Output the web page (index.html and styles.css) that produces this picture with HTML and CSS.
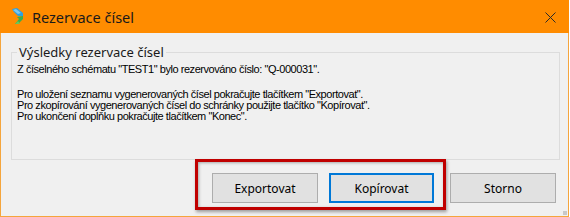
FILE: index.html
```html
<!DOCTYPE html>
<html lang="cs">
<head>
<meta charset="utf-8">
<title>Rezervace čísel</title>
<link rel="stylesheet" href="styles.css">
</head>
<body>
<div class="window">
  <div class="titlebar">
    <svg class="app-icon" width="12" height="17" viewBox="0 0 12 17">
      <polygon points="0,1 5,0 11,5 11,8 6,8 2,4" fill="#2f9fe0"/>
      <polygon points="1,2 4,1 9,5 6,6" fill="#7cc8f0"/>
      <polygon points="11,8 11,11 6,16 3,16 7,11 5,9" fill="#3cae4a"/>
      <polygon points="3,16 6,13 8,16" fill="#6cc65a"/>
    </svg>
    <span class="title">Rezervace čísel</span>
    <svg class="close" width="11" height="11" viewBox="0 0 11 11">
      <path d="M0.5 0.5 L10.5 10.5 M10.5 0.5 L0.5 10.5" stroke="#2b2b2b" stroke-width="1" fill="none"/>
    </svg>
  </div>
  <div class="content">
    <fieldset class="group">
      <legend>Výsledky rezervace čísel</legend>
      <p class="line first">Z číselného schématu "TEST1" bylo rezervováno číslo: "Q-000031".</p>
      <p class="line gap">Pro uložení seznamu vygenerovaných čísel pokračujte tlačítkem "Exportovat".</p>
      <p class="line">Pro zkopírování vygenerovaných čísel do schránky použijte tlačítko "Kopírovat".</p>
      <p class="line">Pro ukončení doplňku pokračujte tlačítkem "Konec".</p>
    </fieldset>
    <div class="buttons">
      <button class="btn">Exportovat</button>
      <button class="btn focused">Kopírovat</button>
      <button class="btn storno">Storno</button>
    </div>
  </div>
  <div class="highlight"></div>
  <div class="grip"></div>
</div>
</body>
</html>
```

FILE: styles.css
```css
html, body {
  margin: 0;
  padding: 0;
  background: #ffffff;
}
.window {
  position: relative;
  width: 569px;
  height: 217px;
  box-sizing: border-box;
  border: 1px solid #f5a53c;
  border-top: none;
  background: #f0f0f0;
  display: flex;
  flex-direction: column;
  font-family: "Liberation Sans", Arial, sans-serif;
}
.titlebar {
  height: 33px;
  margin: 0 -1px;
  background: #ff8c00;
  display: flex;
  align-items: flex-start;
  flex-shrink: 0;
}
.app-icon {
  margin: 8px 0 0 12px;
}
.title {
  margin: 8px 0 0 8px;
  font-family: "Noto Sans", "Open Sans", sans-serif;
  font-size: 14.5px;
  line-height: 18px;
  color: #1a1a1a;
}
.close {
  margin: 12px 0 0 auto;
  margin-right: 13px;
}
.content {
  flex: 1;
  display: flex;
  flex-direction: column;
}
.group {
  margin: 11px 8px 0 10px;
  padding: 0 5px;
  height: 116px;
  box-sizing: border-box;
  border: 1px solid #dcdcdc;
  min-width: 0;
}
.group legend {
  padding: 0 2px;
  font-family: "Noto Sans", "Open Sans", sans-serif;
  font-size: 13px;
  line-height: 16px;
  color: #1a1a1a;
}
.line {
  margin: 0;
  font-size: 11px;
  line-height: 11px;
  letter-spacing: -0.45px;
  color: #000;
  white-space: nowrap;
}
.line.first {
  margin-top: 4px;
}
.line.gap {
  margin-top: 14px;
}
.buttons {
  display: flex;
  justify-content: flex-end;
  padding: 13px 12px 0 0;
}
.btn {
  width: 106px;
  height: 30px;
  box-sizing: border-box;
  background: #e1e1e1;
  border: 1px solid #adadad;
  font-family: "Noto Sans", "Open Sans", sans-serif;
  font-size: 12px;
  color: #000;
  padding: 0;
  margin: 0;
}
.btn.focused {
  width: 105px;
  margin-left: 11px;
  border: 2px solid #0078d7;
}
.btn.storno {
  margin-left: 16px;
}
.highlight {
  position: absolute;
  left: 194px;
  top: 159px;
  width: 251px;
  height: 51px;
  box-sizing: border-box;
  border: 3px solid #c00000;
  box-shadow: 1px 2px 3px rgba(0, 0, 0, 0.35), inset 1px 1px 3px rgba(0, 0, 0, 0.3);
}
.grip {
  position: absolute;
  right: 1px;
  bottom: 1px;
  width: 4px;
  height: 4px;
  background: #c8c8c8;
}
```
